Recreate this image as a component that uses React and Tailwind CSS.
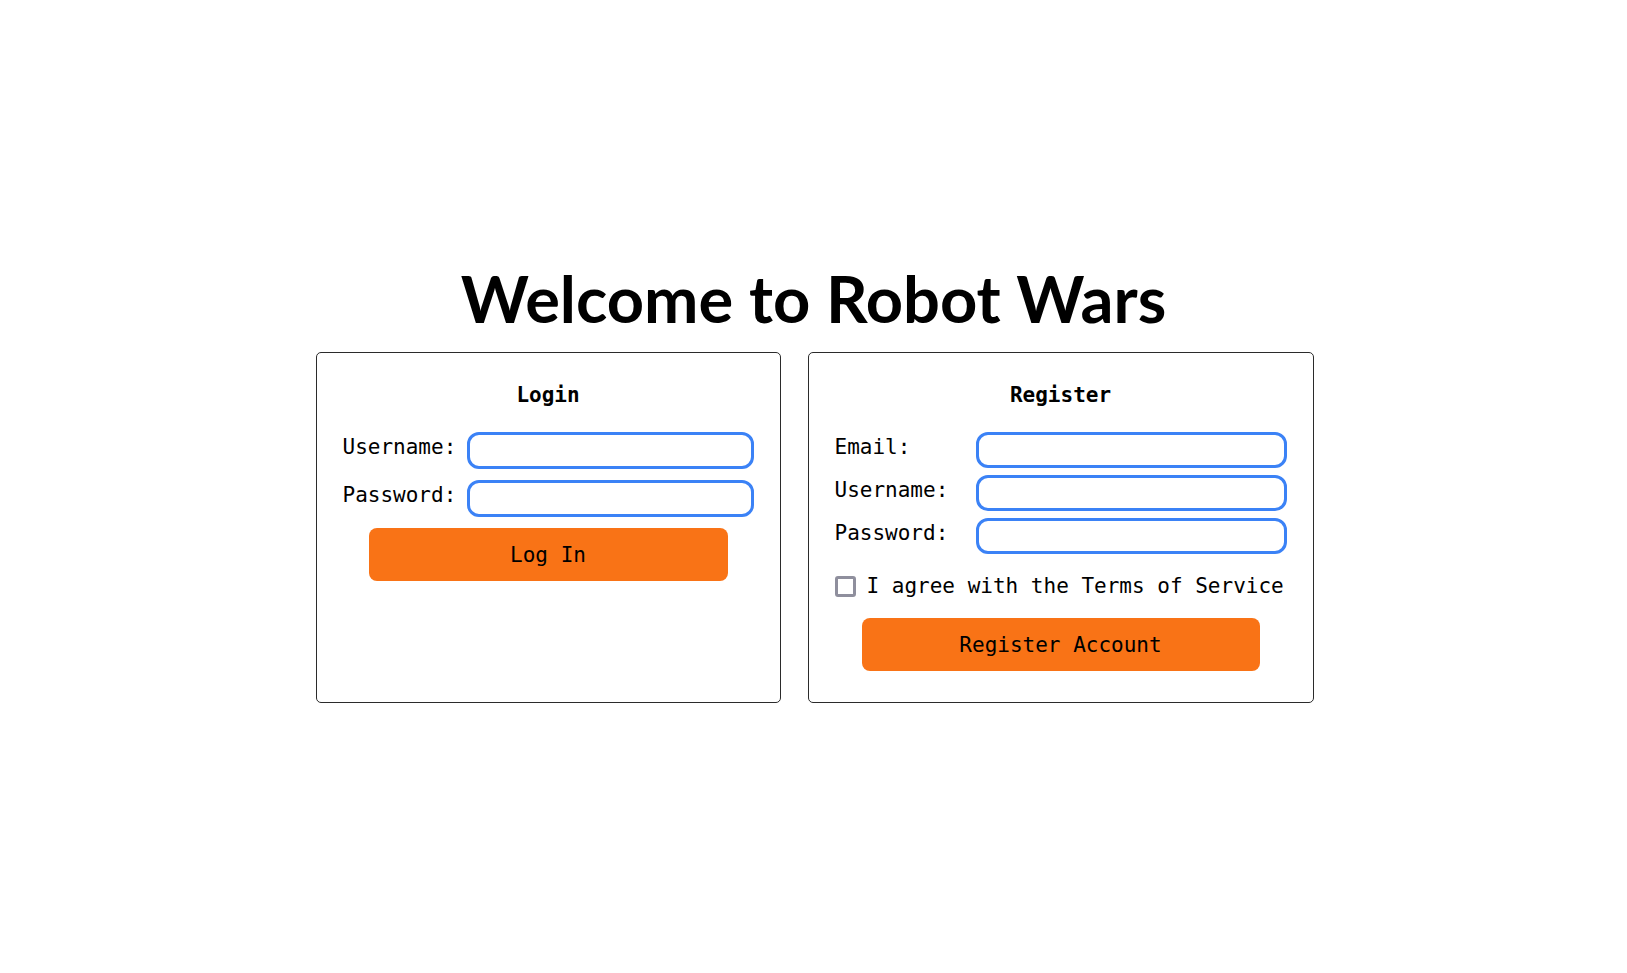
export default function App() {
  const mono = "font-['DejaVu_Sans_Mono',monospace]";

  return (
    <div className="min-h-screen bg-white flex flex-col items-center pt-[266px]">
      <h1 className="font-['Lato',sans-serif] font-bold text-[65px] leading-none text-black">
        Welcome to Robot Wars
      </h1>

      <div className={`flex items-stretch gap-[27px] mt-[21px] ml-[2px] text-[21px] text-black ${mono}`}>
        {/* Login */}
        <div className="w-[465px] border border-[#2b2b2b] rounded-[5px] px-[26px] pt-[27px] pb-[31px] flex flex-col">
          <h2 className="text-center font-bold leading-[30px] mb-[22px]">Login</h2>
          <div className="flex flex-col gap-[11px]">
            <div className="flex items-start">
              <label className="w-[124px] shrink-0 leading-[30px] whitespace-nowrap">Username:</label>
              <input type="text" className="flex-1 h-[37px] border-[3px] border-[#3b82f6] rounded-xl outline-none" />
            </div>
            <div className="flex items-start">
              <label className="w-[124px] shrink-0 leading-[30px] whitespace-nowrap">Password:</label>
              <input type="password" className="flex-1 h-[37px] border-[3px] border-[#3b82f6] rounded-xl outline-none" />
            </div>
          </div>
          <button className="self-center mt-[11px] w-[359px] h-[53px] rounded-lg bg-[#f97316] text-black leading-[30px]">
            Log In
          </button>
        </div>

        {/* Register */}
        <div className="w-[506px] border border-[#2b2b2b] rounded-[5px] px-[26px] pt-[27px] pb-[31px] flex flex-col">
          <h2 className="text-center font-bold leading-[30px] mb-[22px]">Register</h2>
          <div className="flex flex-col gap-[7px]">
            {[
              ["Email:", "email"],
              ["Username:", "text"],
              ["Password:", "password"],
            ].map(([label, type]) => (
              <div key={label} className="flex items-start">
                <label className="w-[141px] shrink-0 leading-[30px] whitespace-nowrap">{label}</label>
                <input type={type} className="flex-1 h-[36px] border-[3px] border-[#3b82f6] rounded-xl outline-none" />
              </div>
            ))}
          </div>
          <label className="flex items-center gap-[11px] mt-[17px] leading-[30px] whitespace-nowrap">
            <span className="w-[21px] h-[21px] shrink-0 border-[3px] border-[#8f8f9d] rounded-[3px] bg-white" />
            I agree with the Terms of Service
          </label>
          <button className="self-center mt-[17px] w-[398px] h-[53px] rounded-lg bg-[#f97316] text-black leading-[30px]">
            Register Account
          </button>
        </div>
      </div>
    </div>
  );
}
